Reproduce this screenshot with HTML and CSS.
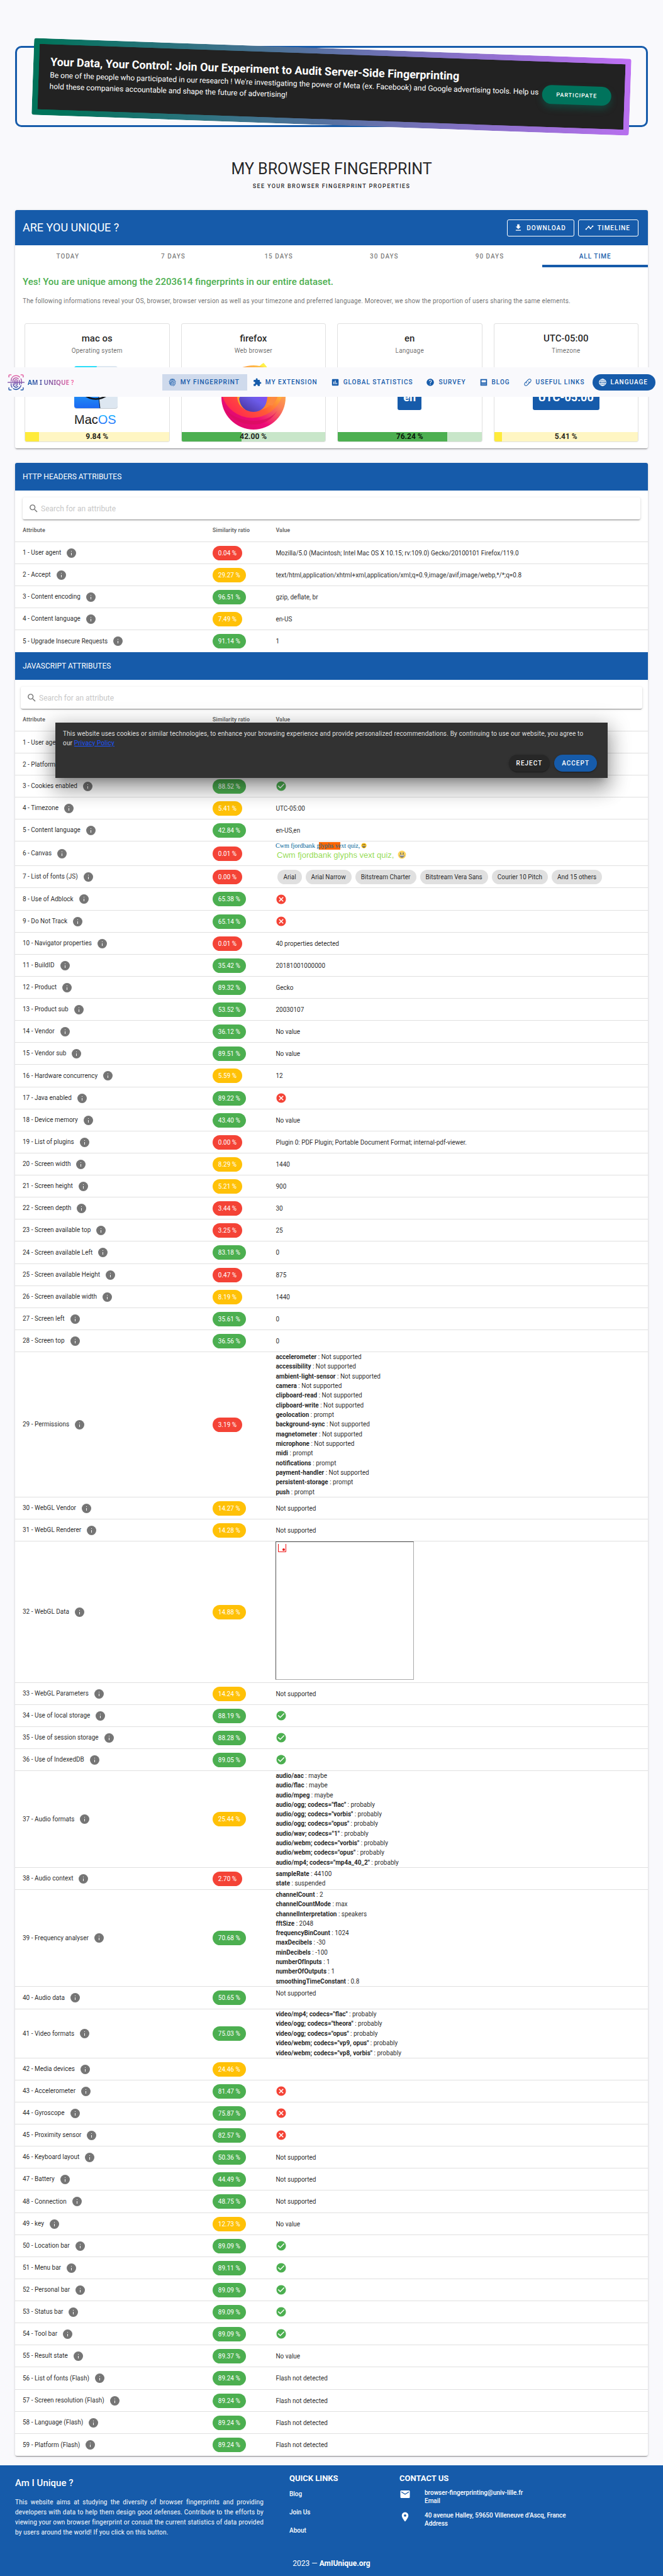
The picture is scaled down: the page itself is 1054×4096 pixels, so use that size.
FILE: index.html
```html
<!DOCTYPE html>
<html lang="en">
<head>
<meta charset="utf-8">
<title>My browser fingerprint</title>
<link rel="stylesheet" href="styles.css">
</head>
<body>
<svg class="sprite" aria-hidden="true">
  <symbol id="ok" viewBox="0 0 24 24"><path d="M12 2C6.5 2 2 6.5 2 12S6.5 22 12 22 22 17.5 22 12 17.5 2 12 2M10 17L5 12L6.41 10.59L10 14.17L17.59 6.58L19 8L10 17Z"/></symbol>
  <symbol id="no" viewBox="0 0 24 24"><path d="M12,2C17.53,2 22,6.47 22,12C22,17.53 17.53,22 12,22C6.47,22 2,17.53 2,12C2,6.47 6.47,2 12,2M15.59,7L12,10.59L8.41,7L7,8.41L10.59,12L7,15.59L8.41,17L12,13.41L15.59,17L17,15.59L13.41,12L17,8.41L15.59,7Z"/></symbol>
  <symbol id="search" viewBox="0 0 24 24"><path d="M9.5,3A6.5,6.5 0 0,1 16,9.5C16,11.11 15.41,12.59 14.44,13.73L14.71,14H15.5L20.5,19L19,20.5L14,15.5V14.71L13.73,14.44C12.59,15.41 11.11,16 9.5,16A6.5,6.5 0 0,1 3,9.5A6.5,6.5 0 0,1 9.5,3M9.5,5C7,5 5,7 5,9.5C5,12 7,14 9.5,14C12,14 14,12 14,9.5C14,7 12,5 9.5,5Z"/></symbol>
  <symbol id="smile" viewBox="0 0 24 24"><circle cx="12" cy="12" r="11" fill="#fcc21b"/><ellipse cx="8.500" cy="8.500" rx="1.500" ry="3" fill="#2f2f2f"/><ellipse cx="15.500" cy="8.500" rx="1.500" ry="3" fill="#2f2f2f"/><path d="M5 13h14q-1 7-7 7t-7-7z" fill="#2f2f2f"/><path d="M6 14h12l-1 2H7z" fill="#fff"/></symbol>
</svg>

<nav class="nav">
  <a class="brand" href="#">
    <svg class="brand-mark" viewBox="0 0 38 38" fill="none" stroke="url(#brandGrad)" stroke-width="2.200" stroke-linecap="round">
      <defs><linearGradient id="brandGrad" gradientUnits="userSpaceOnUse" x1="0" y1="0" x2="0" y2="38"><stop offset="0" stop-color="#f765a3"/><stop offset=".5" stop-color="#8a5fb0"/><stop offset="1" stop-color="#165baa"/></linearGradient></defs>
      <path d="M3 7V4q0-2 2-2h3M30 2h3q2 0 2 2v3M35 31v3q0 2-2 2h-3M8 36H5q-2 0-2-2v-3"/>
      <path d="M1 19.100L37 19"/>
      <path d="M8 16C8 8 13 4 19 4q5 0 8 3M30 11q2 3 1 11M30 26q-3 8-11 9-3 0-6-2M10 30q-3-4-2-8"/>
      <path d="M12 17q0-8 7-8 3 0 5 2M26 14q1 3 1 10M23 28q-4 4-8 0-3-3-2-6"/>
      <path d="M16 24v-8q0-3 3-3t3 3v7q0 2-3 3M19 17v5"/>
    </svg>
    <span class="brand-name">AM I UNIQUE ?</span>
  </a>
  <div class="nav-links">
    <a class="nav-link is-active" href="#"><svg viewBox="0 0 24 24" fill="none" stroke="currentColor" stroke-width="1.300" stroke-linecap="round"><path d="M6 4q6-3 12 0M3 9q9-10 18 0M4 15q-1-9 8-9t8 9q0 3-2 3-3 0-3-4 0-3-3-3t-3 3q0 6 6 8M6 19q-1-2 0-5 0-5 6-5t6 5M9 21q-4-6-1-9M12 14q0 6 6 6"/></svg>My fingerprint</a>
    <a class="nav-link" href="#"><svg viewBox="0 0 24 24"><path d="M20.5,11H19V7C19,5.89 18.1,5 17,5H13V3.5A2.5,2.5 0 0,0 10.5,1A2.5,2.5 0 0,0 8,3.5V5H4A2,2 0 0,0 2,7V10.8H3.5C5,10.8 6.2,12 6.2,13.5C6.2,15 5,16.2 3.5,16.2H2V20A2,2 0 0,0 4,22H7.8V20.5C7.8,19 9,17.8 10.5,17.8C12,17.8 13.2,19 13.2,20.5V22H17A2,2 0 0,0 19,20V16H20.5A2.5,2.5 0 0,0 23,13.5A2.5,2.5 0 0,0 20.5,11Z"/></svg>My extension</a>
    <a class="nav-link" href="#"><svg viewBox="0 0 24 24"><path fill-rule="evenodd" d="M5 3H19Q21 3 21 5V19Q21 21 19 21H5Q3 21 3 19V5Q3 3 5 3M7 10V17H9V10M11 7V17H13V7M15 13V17H17V13Z"/></svg>Global statistics</a>
    <a class="nav-link" href="#"><svg viewBox="0 0 24 24"><path d="M15.07,11.25L14.17,12.17C13.45,12.89 13,13.5 13,15H11V14.5C11,13.39 11.45,12.39 12.17,11.67L13.41,10.41C13.78,10.05 14,9.55 14,9C14,7.89 13.1,7 12,7A2,2 0 0,0 10,9H8A4,4 0 0,1 12,5A4,4 0 0,1 16,9C16,9.88 15.64,10.67 15.07,11.25M13,19H11V17H13M12,2A10,10 0 0,0 2,12A10,10 0 0,0 12,22A10,10 0 0,0 22,12C22,6.47 17.5,2 12,2Z"/></svg>Survey</a>
    <a class="nav-link" href="#"><svg viewBox="0 0 24 24"><path fill-rule="evenodd" d="M3 3H21V21H3ZM6 6V12H18V6ZM5 14V15H19V14ZM5 17V18H19V17Z"/></svg>Blog</a>
    <a class="nav-link" href="#"><svg viewBox="0 0 24 24" fill="none" stroke="currentColor" stroke-width="1.800" stroke-linecap="round"><path d="M9 14q-2-3 1-6l4-4q3-2 6 0 2 3 0 6l-3 3M15 10q2 3-1 6l-4 4q-3 2-6 0-2-3 0-6l3-3"/></svg>Useful links</a>
    <button class="nav-link nav-language" type="button"><svg viewBox="0 0 24 24" fill="none" stroke="currentColor" stroke-width="1.800"><circle cx="12" cy="12" r="9"/><ellipse cx="12" cy="12" rx="4" ry="9"/><path d="M3 9h18M3 15h18M12 3v18"/></svg>Language</button>
  </div>
</nav>

<main class="page">
  <section class="banner">
    <div class="banner-card">
      <div class="banner-text">
        <h2>Your Data, Your Control: Join Our Experiment to Audit Server-Side Fingerprinting</h2>
        <p>Be one of the people who participated in our research ! We're investigating the power of Meta (ex. Facebook) and Google advertising tools. Help us hold these companies accountable and shape the future of advertising!</p>
      </div>
      <button class="participate" type="button">Participate</button>
    </div>
  </section>

  <header class="heading">
    <h1>MY BROWSER FINGERPRINT</h1>
    <p>See your browser fingerprint properties</p>
  </header>

  <section class="card unique">
    <header class="unique-bar">
      <h2>ARE YOU UNIQUE ?</h2>
      <div class="unique-actions">
        <button class="outlined" type="button"><svg viewBox="0 0 24 24"><path d="M5,20H19V18H5M19,9H15V3H9V9H5L12,16L19,9Z"/></svg>Download</button>
        <button class="outlined" type="button"><svg viewBox="0 0 24 24"><path d="M23,8C23,9.1 22.1,10 21,10C20.82,10 20.65,9.97 20.5,9.93L16.93,13.5C17,13.64 17,13.82 17,14A2,2 0 0,1 15,16A2,2 0 0,1 13,14C13,13.82 13,13.64 13.07,13.5L10.5,10.93C10.36,11 10.18,11 10,11C9.82,11 9.64,11 9.5,10.93L4.93,15.5C5,15.65 5,15.82 5,16A2,2 0 0,1 3,18A2,2 0 0,1 1,16A2,2 0 0,1 3,14C3.18,14 3.35,14 3.5,14.07L8.07,9.5C8,9.36 8,9.18 8,9A2,2 0 0,1 10,7A2,2 0 0,1 12,9C12,9.18 12,9.36 11.93,9.5L14.5,12.07C14.64,12 14.82,12 15,12C15.18,12 15.35,12 15.5,12.07L19.07,8.5C19.03,8.35 19,8.18 19,8A2,2 0 0,1 21,6A2,2 0 0,1 23,8Z"/></svg>Timeline</button>
      </div>
    </header>
    <div class="tabs" role="tablist">
      <button role="tab" type="button">Today</button>
      <button role="tab" type="button">7 days</button>
      <button role="tab" type="button">15 days</button>
      <button role="tab" type="button">30 days</button>
      <button role="tab" type="button">90 days</button>
      <button role="tab" type="button" aria-selected="true">All time</button>
    </div>
    <p class="verdict">Yes! You are unique among the 2203614 fingerprints in our entire dataset.</p>
    <p class="intro">The following informations reveal your OS, browser, browser version as well as your timezone and preferred language. Moreover, we show the proportion of users sharing the same elements.</p>
    <div class="stats">
      <article class="stat">
        <h3>mac os</h3>
        <p>Operating system</p>
        <div class="stat-picture">
          <svg width="80" height="122" viewBox="0 0 80 122">
            <defs>
              <linearGradient id="finder" x1="0" y1="0" x2="0" y2="1"><stop offset="0" stop-color="#2ce0f9"/><stop offset="1" stop-color="#1b68f2"/></linearGradient>
              <linearGradient id="os" x1="0" y1="0" x2="0" y2="1"><stop offset="0" stop-color="#1fd0ff"/><stop offset=".5" stop-color="#1e86ff"/><stop offset="1" stop-color="#2a70f5"/></linearGradient>
              <linearGradient id="mac" x1="0" y1="0" x2="0" y2="1"><stop offset="0" stop-color="#666"/><stop offset=".6" stop-color="#111"/></linearGradient>
            </defs>
            <rect x="4" y="18" width="69" height="67" rx="4" fill="#c5ccd3"/>
            <rect x="4" y="17" width="69" height="67" rx="4" fill="#dde7f1"/>
            <path d="M8 17H40Q34 40 34 54H43Q43 70 45 84H8Q4 84 4 80V21Q4 17 8 17Z" fill="url(#finder)"/>
            <path d="M43 66Q44 76 45 84" stroke="#123" fill="none"/>
            <path d="M18 62Q38 77 59 62" stroke="#101418" stroke-width="2.500" fill="none"/>
            <text x="4" y="109" font-family="Liberation Sans, sans-serif" font-size="20" fill="url(#mac)">Mac<tspan fill="url(#os)">OS</tspan></text>
          </svg>
        </div>
        <div class="meter meter-low"><div class="meter-fill" style="width:9.84%"></div><strong>9.84 %</strong></div>
      </article>
      <article class="stat">
        <h3>firefox</h3>
        <p>Web browser</p>
        <div class="stat-picture">
          <svg width="104" height="122" viewBox="0 0 104 122">
            <defs>
              <linearGradient id="fxBody" x1="1" y1=".2" x2=".2" y2=".9"><stop offset="0" stop-color="#ffe33f"/><stop offset=".35" stop-color="#ff9236"/><stop offset=".6" stop-color="#ff5a36"/><stop offset="1" stop-color="#ff2a4d"/></linearGradient>
              <linearGradient id="fxRim" x1="1" y1=".3" x2=".5" y2="1"><stop offset="0" stop-color="#ffc043"/><stop offset=".4" stop-color="#fb7e55"/><stop offset=".8" stop-color="#ee0a78"/><stop offset="1" stop-color="#e30b70"/></linearGradient>
              <linearGradient id="fxGlobe" x1=".9" y1="0" x2=".2" y2="1"><stop offset="0" stop-color="#a044ff"/><stop offset=".5" stop-color="#6b5be8"/><stop offset="1" stop-color="#4a35a0"/></linearGradient>
              <linearGradient id="fxTail" x1="0" y1="0" x2="1" y2="1"><stop offset="0" stop-color="#ffb02a"/><stop offset="1" stop-color="#ff7433"/></linearGradient>
            </defs>
            <path d="M68 12Q54 20 52 40H80Q78 22 68 12Z" fill="#fff04a"/>
            <circle cx="52" cy="67" r="51" fill="url(#fxRim)"/>
            <path d="M2 64A50 50 0 0 0 97 66L90 30H14Q2 44 2 64Z" fill="url(#fxBody)"/>
            <path d="M6 85Q22 110 52 110 76 110 90 88 78 104 52 104 24 104 6 85Z" fill="#d80d5e" opacity=".7"/>
            <path d="M26 66Q27 84 46 89 66 90 84 76 92 68 92 52H26Z" fill="url(#fxTail)"/>
            <path d="M82 80Q92 66 91 50H84Q84 64 74 78Z" fill="#fc8a4a" opacity=".7"/>
            <path d="M29 69Q32 89 52 90 72 89 74 67V50H36Q34 60 29 69Z" fill="url(#fxGlobe)"/>
          </svg>
        </div>
        <div class="meter meter-high"><div class="meter-fill" style="width:42%"></div><strong>42.00 %</strong></div>
      </article>
      <article class="stat">
        <h3>en</h3>
        <p>Language</p>
        <div class="stat-picture"><span class="tag">en</span></div>
        <div class="meter meter-high"><div class="meter-fill" style="width:76.24%"></div><strong>76.24 %</strong></div>
      </article>
      <article class="stat">
        <h3>UTC-05:00</h3>
        <p>Timezone</p>
        <div class="stat-picture"><span class="tag">UTC-05:00</span></div>
        <div class="meter meter-low"><div class="meter-fill" style="width:5.41%"></div><strong>5.41 %</strong></div>
      </article>
    </div>
  </section>

  <section class="card attributes">
    <h2 class="bar">HTTP HEADERS ATTRIBUTES</h2>
    <label class="search"><svg><use href="#search"/></svg><input type="search" placeholder="Search for an attribute" aria-label="Search for an attribute"></label>
    <table>
      <thead><tr><th>Attribute</th><th>Similarity ratio</th><th>Value</th></tr></thead>
      <tbody>
        <tr><td>1 - User agent<i class="info"></i></td><td><span class="chip red">0.04 %</span></td><td>Mozilla/5.0 (Macintosh; Intel Mac OS X 10.15; rv:109.0) Gecko/20100101 Firefox/119.0</td></tr>
        <tr><td>2 - Accept<i class="info"></i></td><td><span class="chip amber">29.27 %</span></td><td>text/html,application/xhtml+xml,application/xml;q=0.9,image/avif,image/webp,*/*;q=0.8</td></tr>
        <tr><td>3 - Content encoding<i class="info"></i></td><td><span class="chip green">96.51 %</span></td><td>gzip, deflate, br</td></tr>
        <tr><td>4 - Content language<i class="info"></i></td><td><span class="chip amber">7.49 %</span></td><td>en-US</td></tr>
        <tr><td>5 - Upgrade Insecure Requests<i class="info"></i></td><td><span class="chip green">91.14 %</span></td><td>1</td></tr>
      </tbody>
    </table>

    <h2 class="bar">JAVASCRIPT ATTRIBUTES</h2>
    <label class="search search-wide"><svg><use href="#search"/></svg><input type="search" placeholder="Search for an attribute" aria-label="Search for an attribute"></label>
    <table>
      <thead><tr><th>Attribute</th><th>Similarity ratio</th><th>Value</th></tr></thead>
      <tbody>
        <tr><td>1 - User agent</td><td></td><td></td></tr>
        <tr><td>2 - Platform</td><td></td><td></td></tr>
        <tr><td>3 - Cookies enabled<i class="info"></i></td><td><span class="chip green">88.52 %</span></td><td><svg class="yes"><use href="#ok"/></svg></td></tr>
        <tr><td>4 - Timezone<i class="info"></i></td><td><span class="chip amber">5.41 %</span></td><td>UTC-05:00</td></tr>
        <tr><td>5 - Content language<i class="info"></i></td><td><span class="chip green">42.84 %</span></td><td>en-US,en</td></tr>
        <tr class="tall"><td>6 - Canvas<i class="info"></i></td><td><span class="chip red">0.01 %</span></td><td>
          <svg class="canvas-sample" viewBox="0 0 220 38">
            <rect x="69" y="1" width="34" height="12" fill="#f60"/>
            <text x="0" y="10" font-family="Liberation Serif, serif" font-size="10" fill="#069">Cwm fjordbank glyphs vext quiz,</text>
            <use href="#smile" x="136" y="2" width="9" height="9"/>
            <text x="2" y="26" font-family="Liberation Sans, sans-serif" font-size="13" fill="#66cc00" fill-opacity=".7">Cwm fjordbank glyphs vext quiz,</text>
            <use href="#smile" x="194" y="14" width="14" height="14" opacity=".7"/>
          </svg></td></tr>
        <tr><td>7 - List of fonts (JS)<i class="info"></i></td><td><span class="chip red">0.00 %</span></td><td><div class="fonts"><span class="chip">Arial</span><span class="chip">Arial Narrow</span><span class="chip">Bitstream Charter</span><span class="chip">Bitstream Vera Sans</span><span class="chip">Courier 10 Pitch</span><span class="chip">And 15 others</span></div></td></tr>
        <tr><td>8 - Use of Adblock<i class="info"></i></td><td><span class="chip green">65.38 %</span></td><td><svg class="nope"><use href="#no"/></svg></td></tr>
        <tr><td>9 - Do Not Track<i class="info"></i></td><td><span class="chip green">65.14 %</span></td><td><svg class="nope"><use href="#no"/></svg></td></tr>
        <tr><td>10 - Navigator properties<i class="info"></i></td><td><span class="chip red">0.01 %</span></td><td>40 properties detected</td></tr>
        <tr><td>11 - BuildID<i class="info"></i></td><td><span class="chip green">35.42 %</span></td><td>20181001000000</td></tr>
        <tr><td>12 - Product<i class="info"></i></td><td><span class="chip green">89.32 %</span></td><td>Gecko</td></tr>
        <tr><td>13 - Product sub<i class="info"></i></td><td><span class="chip green">53.52 %</span></td><td>20030107</td></tr>
        <tr><td>14 - Vendor<i class="info"></i></td><td><span class="chip green">36.12 %</span></td><td>No value</td></tr>
        <tr><td>15 - Vendor sub<i class="info"></i></td><td><span class="chip green">89.51 %</span></td><td>No value</td></tr>
        <tr><td>16 - Hardware concurrency<i class="info"></i></td><td><span class="chip amber">5.59 %</span></td><td>12</td></tr>
        <tr><td>17 - Java enabled<i class="info"></i></td><td><span class="chip green">89.22 %</span></td><td><svg class="nope"><use href="#no"/></svg></td></tr>
        <tr><td>18 - Device memory<i class="info"></i></td><td><span class="chip green">43.40 %</span></td><td>No value</td></tr>
        <tr><td>19 - List of plugins<i class="info"></i></td><td><span class="chip red">0.00 %</span></td><td>Plugin 0: PDF Plugin; Portable Document Format; internal-pdf-viewer.</td></tr>
        <tr><td>20 - Screen width<i class="info"></i></td><td><span class="chip amber">8.29 %</span></td><td>1440</td></tr>
        <tr><td>21 - Screen height<i class="info"></i></td><td><span class="chip amber">5.21 %</span></td><td>900</td></tr>
        <tr><td>22 - Screen depth<i class="info"></i></td><td><span class="chip red">3.44 %</span></td><td>30</td></tr>
        <tr><td>23 - Screen available top<i class="info"></i></td><td><span class="chip red">3.25 %</span></td><td>25</td></tr>
        <tr><td>24 - Screen available Left<i class="info"></i></td><td><span class="chip green">83.18 %</span></td><td>0</td></tr>
        <tr><td>25 - Screen available Height<i class="info"></i></td><td><span class="chip red">0.47 %</span></td><td>875</td></tr>
        <tr><td>26 - Screen available width<i class="info"></i></td><td><span class="chip amber">8.19 %</span></td><td>1440</td></tr>
        <tr><td>27 - Screen left<i class="info"></i></td><td><span class="chip green">35.61 %</span></td><td>0</td></tr>
        <tr><td>28 - Screen top<i class="info"></i></td><td><span class="chip green">36.56 %</span></td><td>0</td></tr>
        <tr><td>29 - Permissions<i class="info"></i></td><td><span class="chip red">3.19 %</span></td><td><ul class="pairs pairs-long"><li><b>accelerometer</b> : Not supported</li><li><b>accessibility</b> : Not supported</li><li><b>ambient-light-sensor</b> : Not supported</li><li><b>camera</b> : Not supported</li><li><b>clipboard-read</b> : Not supported</li><li><b>clipboard-write</b> : Not supported</li><li><b>geolocation</b> : prompt</li><li><b>background-sync</b> : Not supported</li><li><b>magnetometer</b> : Not supported</li><li><b>microphone</b> : Not supported</li><li><b>midi</b> : prompt</li><li><b>notifications</b> : prompt</li><li><b>payment-handler</b> : Not supported</li><li><b>persistent-storage</b> : prompt</li><li><b>push</b> : prompt</li></ul></td></tr>
        <tr><td>30 - WebGL Vendor<i class="info"></i></td><td><span class="chip amber">14.27 %</span></td><td>Not supported</td></tr>
        <tr><td>31 - WebGL Renderer<i class="info"></i></td><td><span class="chip amber">14.28 %</span></td><td>Not supported</td></tr>
        <tr><td>32 - WebGL Data<i class="info"></i></td><td><span class="chip amber">14.88 %</span></td><td class="top"><div class="webgl"><svg viewBox="0 0 13 13" fill="none" stroke="#e11"><path d="M.5 0V12.500H12.500V0"/><circle cx="9" cy="9" r="2" fill="#e11" stroke="none"/></svg></div></td></tr>
        <tr><td>33 - WebGL Parameters<i class="info"></i></td><td><span class="chip amber">14.24 %</span></td><td>Not supported</td></tr>
        <tr><td>34 - Use of local storage<i class="info"></i></td><td><span class="chip green">88.19 %</span></td><td><svg class="yes"><use href="#ok"/></svg></td></tr>
        <tr><td>35 - Use of session storage<i class="info"></i></td><td><span class="chip green">88.28 %</span></td><td><svg class="yes"><use href="#ok"/></svg></td></tr>
        <tr><td>36 - Use of IndexedDB<i class="info"></i></td><td><span class="chip green">89.05 %</span></td><td><svg class="yes"><use href="#ok"/></svg></td></tr>
        <tr><td>37 - Audio formats<i class="info"></i></td><td><span class="chip amber">25.44 %</span></td><td><ul class="pairs pairs-mid"><li><b>audio/aac</b> : maybe</li><li><b>audio/flac</b> : maybe</li><li><b>audio/mpeg</b> : maybe</li><li><b>audio/ogg; codecs="flac"</b> : probably</li><li><b>audio/ogg; codecs="vorbis"</b> : probably</li><li><b>audio/ogg; codecs="opus"</b> : probably</li><li><b>audio/wav; codecs="1"</b> : probably</li><li><b>audio/webm; codecs="vorbis"</b> : probably</li><li><b>audio/webm; codecs="opus"</b> : probably</li><li><b>audio/mp4; codecs="mp4a_40_2"</b> : probably</li></ul></td></tr>
        <tr><td>38 - Audio context<i class="info"></i></td><td><span class="chip red">2.70 %</span></td><td><ul class="pairs"><li><b>sampleRate</b> : 44100</li><li><b>state</b> : suspended</li></ul></td></tr>
        <tr><td>39 - Frequency analyser<i class="info"></i></td><td><span class="chip green">70.68 %</span></td><td><ul class="pairs pairs-mid"><li><b>channelCount</b> : 2</li><li><b>channelCountMode</b> : max</li><li><b>channelInterpretation</b> : speakers</li><li><b>fftSize</b> : 2048</li><li><b>frequencyBinCount</b> : 1024</li><li><b>maxDecibels</b> : -30</li><li><b>minDecibels</b> : -100</li><li><b>numberOfInputs</b> : 1</li><li><b>numberOfOutputs</b> : 1</li><li><b>smoothingTimeConstant</b> : 0.8</li></ul></td></tr>
        <tr><td>40 - Audio data<i class="info"></i></td><td><span class="chip green">50.65 %</span></td><td><ul class="pairs"><li>Not supported</li><li>&nbsp;</li></ul></td></tr>
        <tr><td>41 - Video formats<i class="info"></i></td><td><span class="chip green">75.03 %</span></td><td><ul class="pairs pairs-short"><li><b>video/mp4; codecs="flac"</b> : probably</li><li><b>video/ogg; codecs="theora"</b> : probably</li><li><b>video/ogg; codecs="opus"</b> : probably</li><li><b>video/webm; codecs="vp9, opus"</b> : probably</li><li><b>video/webm; codecs="vp8, vorbis"</b> : probably</li></ul></td></tr>
        <tr><td>42 - Media devices<i class="info"></i></td><td><span class="chip amber">24.46 %</span></td><td></td></tr>
        <tr><td>43 - Accelerometer<i class="info"></i></td><td><span class="chip green">81.47 %</span></td><td><svg class="nope"><use href="#no"/></svg></td></tr>
        <tr><td>44 - Gyroscope<i class="info"></i></td><td><span class="chip green">75.87 %</span></td><td><svg class="nope"><use href="#no"/></svg></td></tr>
        <tr><td>45 - Proximity sensor<i class="info"></i></td><td><span class="chip green">82.57 %</span></td><td><svg class="nope"><use href="#no"/></svg></td></tr>
        <tr><td>46 - Keyboard layout<i class="info"></i></td><td><span class="chip green">50.36 %</span></td><td>Not supported</td></tr>
        <tr><td>47 - Battery<i class="info"></i></td><td><span class="chip green">44.49 %</span></td><td>Not supported</td></tr>
        <tr><td>48 - Connection<i class="info"></i></td><td><span class="chip green">48.75 %</span></td><td>Not supported</td></tr>
        <tr><td>49 - key<i class="info"></i></td><td><span class="chip amber">12.73 %</span></td><td>No value</td></tr>
        <tr><td>50 - Location bar<i class="info"></i></td><td><span class="chip green">89.09 %</span></td><td><svg class="yes"><use href="#ok"/></svg></td></tr>
        <tr><td>51 - Menu bar<i class="info"></i></td><td><span class="chip green">89.11 %</span></td><td><svg class="yes"><use href="#ok"/></svg></td></tr>
        <tr><td>52 - Personal bar<i class="info"></i></td><td><span class="chip green">89.09 %</span></td><td><svg class="yes"><use href="#ok"/></svg></td></tr>
        <tr><td>53 - Status bar<i class="info"></i></td><td><span class="chip green">89.09 %</span></td><td><svg class="yes"><use href="#ok"/></svg></td></tr>
        <tr><td>54 - Tool bar<i class="info"></i></td><td><span class="chip green">89.09 %</span></td><td><svg class="yes"><use href="#ok"/></svg></td></tr>
        <tr><td>55 - Result state<i class="info"></i></td><td><span class="chip green">89.37 %</span></td><td>No value</td></tr>
        <tr><td>56 - List of fonts (Flash)<i class="info"></i></td><td><span class="chip green">89.24 %</span></td><td>Flash not detected</td></tr>
        <tr><td>57 - Screen resolution (Flash)<i class="info"></i></td><td><span class="chip green">89.24 %</span></td><td>Flash not detected</td></tr>
        <tr><td>58 - Language (Flash)<i class="info"></i></td><td><span class="chip green">89.24 %</span></td><td>Flash not detected</td></tr>
        <tr><td>59 - Platform (Flash)<i class="info"></i></td><td><span class="chip green">89.24 %</span></td><td>Flash not detected</td></tr>
      </tbody>
    </table>
  </section>
</main>

<footer class="footer">
  <div class="footer-columns">
    <section class="about">
      <h2>Am I Unique ?</h2>
      <p>This website aims at studying the diversity of browser fingerprints and providing developers with data to help them design good defenses. Contribute to the efforts by viewing your own browser fingerprint or consult the current statistics of data provided by users around the world! If you click on this button.</p>
    </section>
    <section>
      <h3>QUICK LINKS</h3>
      <ul class="quick">
        <li><a href="#">Blog</a></li>
        <li><a href="#">Join Us</a></li>
        <li><a href="#">About</a></li>
      </ul>
    </section>
    <section>
      <h3>CONTACT US</h3>
      <ul class="contact">
        <li><svg viewBox="0 0 24 24"><path d="M20,8L12,13L4,8V6L12,11L20,6M20,4H4C2.89,4 2,4.89 2,6V18A2,2 0 0,0 4,20H20A2,2 0 0,0 22,18V6C22,4.89 21.1,4 20,4Z"/></svg><div>browser-fingerprinting@univ-lille.fr<br>Email</div></li>
        <li><svg viewBox="0 0 24 24"><path d="M12,11.5A2.5,2.5 0 0,1 9.5,9A2.5,2.5 0 0,1 12,6.5A2.5,2.5 0 0,1 14.5,9A2.5,2.5 0 0,1 12,11.5M12,2A7,7 0 0,0 5,9C5,14.25 12,22 12,22C12,22 19,14.25 19,9A7,7 0 0,0 12,2Z"/></svg><div>40 avenue Halley, 59650 Villeneuve d’Ascq, France<br>Address</div></li>
      </ul>
    </section>
  </div>
  <p class="copyright">2023 — <strong>AmIUnique.org</strong></p>
</footer>

<aside class="cookies" role="dialog" aria-label="Cookies">
  <p>This website uses cookies or similar technologies, to enhance your browsing experience and provide personalized recommendations. By continuing to use our website, you agree to our <a href="#">Privacy Policy</a></p>
  <div class="cookies-actions">
    <button class="reject" type="button">Reject</button>
    <button class="accept" type="button">Accept</button>
  </div>
</aside>
</body>
</html>
```
FILE: styles.css
```css
:root {
  --primary: #165baa;
  --page: #f9f9fc;
  --text: rgba(0, 0, 0, .87);
  --muted: rgba(0, 0, 0, .6);
  --line: #e0e0e0;
  --raised: 0 2px 1px -1px rgba(0, 0, 0, .3), 0 1px 2px rgba(0, 0, 0, .14), 0 1px 4px rgba(0, 0, 0, .12);
}

* { box-sizing: border-box; }

body {
  position: relative;
  margin: 0;
  background: var(--page);
  color: var(--text);
  font: 400 10px/15px Roboto, sans-serif;
}

h1, h2, h3, p, ul { margin: 0; padding: 0; }
ul { list-style: none; }
a { color: inherit; text-decoration: none; }
svg:not([fill]) { fill: currentColor; }
button { border: 0; padding: 0; background: none; color: inherit; font: inherit; }
.sprite { position: absolute; width: 0; height: 0; }

.nav-link, .outlined, .tabs button, .cookies button, .participate {
  font-size: 10px;
  font-weight: 500;
  letter-spacing: 1px;
  text-transform: uppercase;
}

/* Body copy is set slightly open */
.intro, .stat p, .about p, .cookies p { letter-spacing: .018em; }

/* Navigation, floating over the page */
.nav {
  position: absolute;
  z-index: 2;
  top: 584px;
  left: 0;
  right: 0;
  display: flex;
  align-items: center;
  justify-content: space-between;
  height: 47px;
  padding: 0 12px;
  background: var(--page);
}
.brand { display: flex; align-items: center; gap: 5px; }
.brand-mark { width: 27px; height: 28px; }
.brand-name {
  background: linear-gradient(90deg, #165baa, #f765a3);
  background-clip: text;
  color: transparent;
  font: 700 10px/16px "Noto Sans", sans-serif;
}
.nav-links { display: flex; }
.nav-link {
  display: flex;
  align-items: center;
  height: 26px;
  padding: 0 12px 0 9px;
  color: var(--primary);
}
.nav-link svg { width: 14px; height: 14px; margin-right: 6px; }
.is-active { background: #cfdaec; }
.nav-language { border-radius: 13px; background: var(--primary); color: #fff; }

.page { padding: 73px 24px 15px; }

/* Banner */
.banner {
  display: flex;
  align-items: center;
  justify-content: center;
  height: 129px;
  border: 3px solid var(--primary);
  border-radius: 10px;
}
.banner-card {
  display: flex;
  flex: none;
  align-items: center;
  gap: 4px;
  width: 95%;
  height: 122px;
  padding: 0 21px 0 18px;
  border: 9px solid transparent;
  border-radius: 4px;
  background: linear-gradient(#222, #222) padding-box, linear-gradient(71deg, #00735a 5%, #c070f5) border-box;
  color: #fff;
  transform: rotate(2deg);
}
.banner-text { flex: 1; padding-bottom: 12px; font-size: 12px; line-height: 18px; }
.banner-text h2 { font-size: 18px; font-weight: 700; line-height: 24px; }
.participate {
  width: 110px;
  height: 30px;
  border-radius: 15px;
  background: #00735c;
  box-shadow: 0 6px 11px rgba(0, 115, 92, .4);
  font-size: 9px;
}

.heading { margin-top: 52px; text-align: center; }
.heading h1 { font-size: 25px; font-weight: 400; line-height: 30px; }
.heading p {
  margin-top: 4px;
  font-size: 9px;
  font-weight: 500;
  line-height: 16px;
  letter-spacing: .15em;
  text-transform: uppercase;
}

/* Cards */
.card { overflow: clip; overflow-clip-margin: 8px; border-radius: 3px; background: #fff; box-shadow: var(--raised); }
.unique { margin-top: 30px; padding-bottom: 10px; }
.unique-bar {
  display: flex;
  align-items: center;
  justify-content: space-between;
  height: 56px;
  padding: 0 15px 0 12px;
  border-radius: 3px 3px 0 0;
  background: var(--primary);
  color: #fff;
}
.unique-bar h2 { font-size: 18px; font-weight: 400; line-height: 24px; }
.unique-actions { display: flex; gap: 6px; }
.outlined {
  display: flex;
  align-items: center;
  height: 27px;
  padding: 0 12px 0 10px;
  border: 1px solid #fff;
  border-radius: 3px;
}
.outlined svg { width: 14px; height: 14px; margin-right: 6px; }

.tabs { display: grid; grid-template-columns: repeat(6, 1fr); height: 35px; color: rgba(0, 0, 0, .54); }
.tabs button { border: solid transparent; border-width: 4px 0; }
.tabs [aria-selected] { border-bottom-color: var(--primary); color: var(--primary); }

.verdict { margin: 13px 12px 0; color: #4caf50; font-size: 15px; font-weight: 500; line-height: 20px; }
.intro { margin: 13px 12px 0; color: var(--muted); line-height: 16px; }

.stats { display: grid; grid-template-columns: repeat(4, 1fr); gap: 18px; margin: 27px 15px 0; }
.stat {
  display: flex;
  flex-direction: column;
  overflow: hidden;
  border: 1px solid var(--line);
  border-radius: 3px;
  padding-top: 13px;
  text-align: center;
}
.stat h3 { font-size: 15px; font-weight: 500; line-height: 20px; }
.stat p { margin-top: 3px; color: var(--muted); line-height: 14px; }
.stat-picture { display: flex; align-items: center; justify-content: center; height: 122px; }
.tag {
  margin-top: 12px;
  padding: 9px;
  border-radius: 3px;
  background: var(--primary);
  color: #fff;
  font-size: 18px;
  font-weight: 700;
  line-height: 22px;
}
.meter { position: relative; height: 15px; font-size: 12px; }
.meter-fill { position: absolute; inset: 0 auto 0 0; }
.meter strong { position: relative; }
.meter-low { background: #fff6c3; }
.meter-low .meter-fill { background: #ffeb3b; }
.meter-high { background: #c8e6c9; }
.meter-high .meter-fill { background: #4caf50; }

/* Attribute tables */
.attributes { margin-top: 23px; }
.bar {
  height: 44px;
  padding: 0 12px;
  background: var(--primary);
  color: #fff;
  font-size: 12px;
  font-weight: 400;
  line-height: 44px;
}
.bar:first-child { border-radius: 3px 3px 0 0; }
.search {
  display: flex;
  align-items: center;
  height: 35px;
  margin: 11px 12px 0;
  padding-left: 9px;
  border-radius: 3px;
  box-shadow: var(--raised);
}
.search-wide { margin: 11px 9px 0; }
.search svg { width: 17px; height: 17px; margin-right: 3px; color: #757575; }
.search input { flex: 1; border: 0; padding: 0; background: none; font: 400 12px/18px Roboto, sans-serif; outline: 0; }
.search input::placeholder { color: #c8c8c8; opacity: 1; }

table { width: 100%; table-layout: fixed; border-spacing: 0; }
th:nth-child(1) { width: 30%; }
th:nth-child(2) { width: 10%; }
th { height: 36px; padding: 0 12px; border-bottom: 1px solid var(--line); color: var(--muted); font-size: 9px; text-align: left; white-space: nowrap; }
td { height: 35px; padding: 0 12px; border-bottom: 1px solid var(--line); }
tr:nth-child(8n) td { height: 36px; }
.tall td { height: 39px; }
tr:last-child td { border-bottom: 0; }
td svg { display: block; width: 18px; height: 18px; }
.yes { color: #4caf50; }
.nope { color: #f44336; }
td.top { padding-top: 0; vertical-align: top; }
td .canvas-sample { width: 220px; height: 38px; }

.info {
  position: relative;
  display: inline-block;
  width: 15px;
  height: 15px;
  margin-left: 9px;
  border-radius: 50%;
  background: #757575;
  vertical-align: middle;
}
.info::before, .info::after { content: ""; position: absolute; left: 7px; width: 1px; background: #fff; }
.info::before { top: 4px; height: 1px; }
.info::after { top: 7px; height: 4px; }

.chip {
  display: inline-block;
  padding: 0 9px;
  border-radius: 12px;
  background: #e0e0e0;
  line-height: 23px;
  vertical-align: middle;
  white-space: nowrap;
}
.red, .amber, .green { color: #fff; }
.red { background: #f44336; }
.amber { background: #ffc107; }
.green { background: #4caf50; }
.fonts { display: flex; gap: 6px; padding: 0 3px; }

.pairs { display: grid; }
.pairs-long { height: 230px; }
.pairs-mid { height: 153px; }
.pairs-short { height: 77px; }

.webgl { width: 220px; height: 220px; margin-bottom: 4px; padding: 3px; border: 1px solid #555; border-right-color: #aaa; border-bottom-color: #aaa; }
.webgl svg { width: 13px; height: 13px; }

/* Footer */
.footer { padding: 12px 24px 12px; background: var(--primary); color: #fff; }
.footer-columns { display: grid; grid-template-columns: 436fr 175fr 395fr; }
.footer h2 { font-size: 15px; font-weight: 500; line-height: 20px; }
.footer h3 { font-size: 13px; font-weight: 700; line-height: 18px; }
.about { padding: 6px 41px 0 0; }
.about p { margin-top: 13px; line-height: 16px; text-align: justify; }
.quick, .contact { font-weight: 500; line-height: 13px; }
.quick { display: grid; gap: 16px; margin-top: 9px; }
.contact { display: grid; gap: 10px; margin-top: 7px; }
.contact li { display: flex; gap: 22px; }
.contact svg { width: 18px; height: 18px; }
.copyright { margin-top: 33px; font-size: 12px; line-height: 16px; text-align: center; }

/* Cookie notice, floating over the page */
.cookies {
  position: absolute;
  z-index: 3;
  top: 1149px;
  left: 88px;
  right: 88px;
  padding: 10px 17px 10px 12px;
  background: #323232;
  box-shadow: 0 8px 11px -5px rgba(0, 0, 0, .2), 0 18px 28px 2px rgba(0, 0, 0, .24), 0 7px 34px 6px rgba(0, 0, 0, .2);
  color: rgba(255, 255, 255, .87);
}
.cookies p { padding-right: 12px; }
.cookies a { color: #1a52ff; text-decoration: underline; }
.cookies-actions { display: flex; justify-content: flex-end; gap: 7px; margin-top: 11px; }
.cookies button { height: 27px; padding: 0 12px; border-radius: 14px; color: #fff; box-shadow: var(--raised); }
.reject { background: #272727; }
.accept { background: var(--primary); }
```
